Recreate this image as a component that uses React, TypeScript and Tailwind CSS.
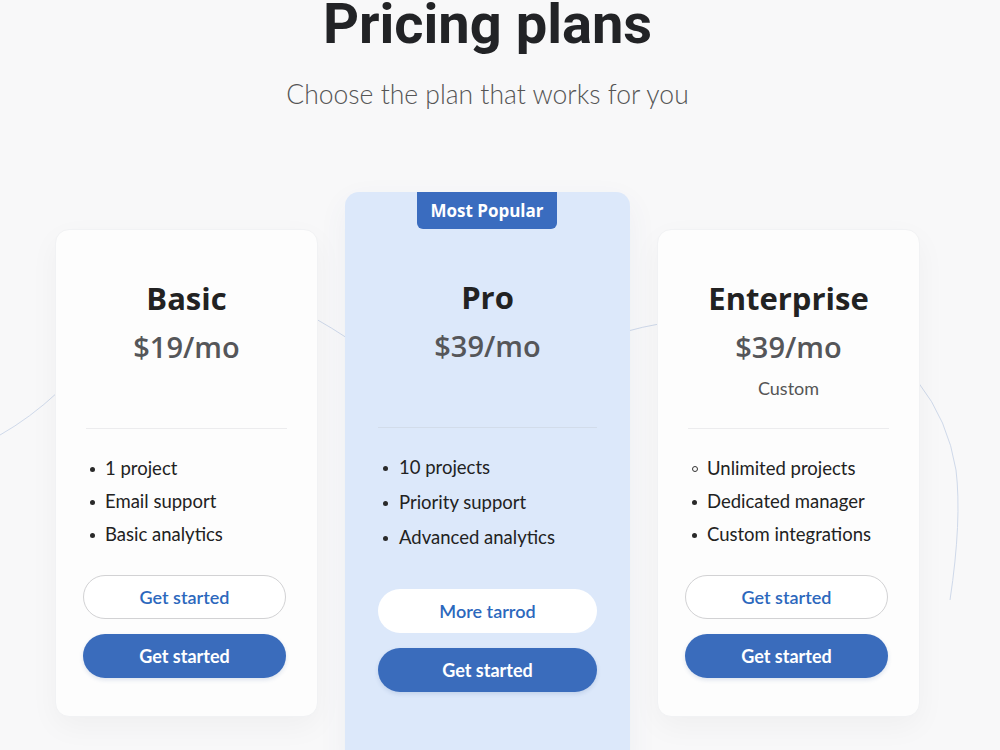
import React from "react";

interface Plan {
  name: string;
  price: string;
  note?: string;
  features: string[];
  secondary: string;
  featured?: boolean;
}

const plans: Plan[] = [
  {
    name: "Basic",
    price: "$19/mo",
    features: ["1 project", "Email support", "Basic analytics"],
    secondary: "Get started",
  },
  {
    name: "Pro",
    price: "$39/mo",
    features: ["10 projects", "Priority support", "Advanced analytics"],
    secondary: "More tarrod",
    featured: true,
  },
  {
    name: "Enterprise",
    price: "$39/mo",
    note: "Custom",
    features: ["Unlimited projects", "Dedicated manager", "Custom integrations"],
    secondary: "Get started",
  },
];

const heading = { fontFamily: "Roboto, 'Liberation Sans', sans-serif" };
const display = { fontFamily: "'Open Sans', 'Liberation Sans', sans-serif" };
const body = { fontFamily: "Lato, 'Open Sans', sans-serif" };

// faint connector lines drawn behind the cards
const Backdrop = () => (
  <svg
    className="pointer-events-none absolute inset-0"
    width="1000"
    height="750"
    viewBox="0 0 1000 750"
    fill="none"
  >
    <g stroke="#cfd9ea" strokeWidth="1">
      <path d="M0 435 Q 30 418 58 392" />
      <path d="M316 319 Q 332 328 347 338" />
      <path d="M628 331 Q 642 327 659 324" />
      <path d="M918 382 Q 948 420 956 470 Q 962 520 950 600" />
    </g>
  </svg>
);

const PlanCard = ({ plan }: { plan: Plan }) => {
  const featured = plan.featured;

  return (
    <div
      className={
        featured
          ? "relative flex w-[285px] h-[580px] flex-col rounded-[14px] bg-[#dce8fa] pt-[37px] shadow-[0_10px_30px_rgba(60,90,140,0.06)]"
          : "relative flex w-[263px] h-[488px] flex-col rounded-[14px] border border-[#f1f2f4] bg-[#fdfdfd] shadow-[0_10px_30px_rgba(0,0,0,0.04)]"
      }
    >
      {featured && (
        <div
          className="absolute left-[72px] top-0 flex h-[37px] w-[140px] items-center justify-center rounded-b-[6px] bg-[#3a6cbf] text-[17px] font-bold text-white"
          style={display}
        >
          Most Popular
        </div>
      )}

      <div className="flex h-[198px] flex-col items-center pt-[50px]">
        <div className="text-[31px] font-bold leading-[36px] text-[#222]" style={display}>
          {plan.name}
        </div>
        <div className="mt-[13px] text-[29px] font-semibold leading-[36px] text-[#555659]" style={display}>
          {plan.price}
        </div>
        {plan.note && (
          <div className="mt-[11px] text-[18px] leading-[24px] text-[#555]" style={body}>
            {plan.note}
          </div>
        )}
      </div>

      <div className={featured ? "mx-[33px] h-px bg-[#d2dcea]" : "mx-[30px] h-px bg-[#ececee]"} />

      <ul
        className={
          featured
            ? "mt-[29px] flex flex-col gap-[13px] pl-[38px]"
            : "mt-[29px] flex flex-col gap-[11px] pl-[34px]"
        }
        style={body}
      >
        {plan.features.map((f, i) => (
          <li key={f} className="flex h-[22px] items-center text-[18.5px] text-[#222]">
            {plan.name === "Enterprise" && i === 0 ? (
              <span className="mr-[9px] h-[6px] w-[6px] rounded-full border-[1.5px] border-[#333]" />
            ) : (
              <span
                className={
                  featured
                    ? "mr-[11px] h-[5px] w-[5px] rounded-full bg-[#2a2a2a]"
                    : "mr-[10px] h-[5px] w-[5px] rounded-full bg-[#2a2a2a]"
                }
              />
            )}
            {f}
          </li>
        ))}
      </ul>

      <div
        className={
          featured
            ? "mt-[40px] flex flex-col gap-[15px] px-[33px]"
            : "mt-[29px] flex flex-col gap-[15px] pl-[27px] pr-[31px]"
        }
        style={body}
      >
        <button
          className={
            featured
              ? "h-[44px] rounded-full bg-white text-[18px] font-semibold text-[#2c68bd]"
              : "h-[44px] rounded-full border border-[#d2d2d4] bg-white text-[18px] font-semibold text-[#2c68bd]"
          }
        >
          {plan.secondary}
        </button>
        <button className="h-[44px] rounded-full bg-[#3a6cbc] text-[18px] font-bold text-white shadow-[0_2px_4px_rgba(40,80,150,0.15)]">
          Get started
        </button>
      </div>
    </div>
  );
};

export default function App() {
  return (
    <div className="relative h-[750px] w-[1000px] overflow-hidden bg-[#f8f8f9]">
      <Backdrop />

      <div className="relative ml-[55px] flex w-[865px] flex-col items-center">
        <h1 className="text-[56px] font-bold leading-[48px] text-[#222326]" style={heading}>
          Pricing plans
        </h1>
        <p className="mt-[30px] text-[26.5px] font-light leading-[32px] text-[#555]" style={body}>
          Choose the plan that works for you
        </p>

        <div className="mt-[82px] flex w-full items-start gap-[27px]">
          <div className="mt-[37px]">
            <PlanCard plan={plans[0]} />
          </div>
          <PlanCard plan={plans[1]} />
          <div className="mt-[37px]">
            <PlanCard plan={plans[2]} />
          </div>
        </div>
      </div>
    </div>
  );
}
